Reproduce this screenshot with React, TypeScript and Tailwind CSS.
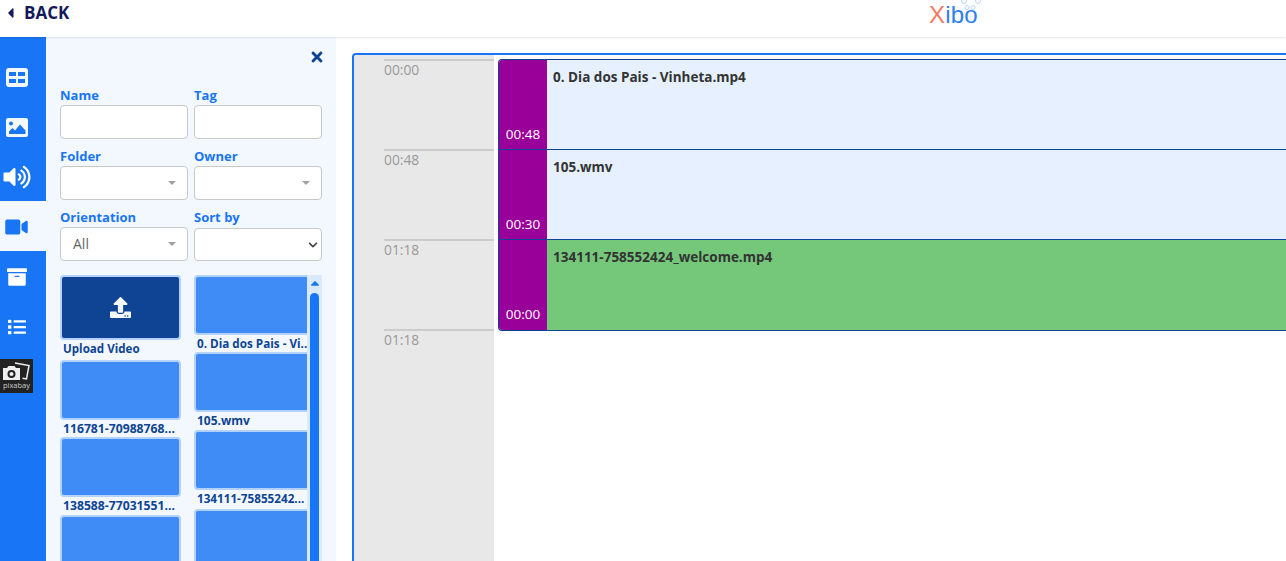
import { FaVolumeUp, FaVideo, FaArchive, FaList, FaTimes, FaCaretLeft, FaUpload, FaCaretUp, FaChevronDown } from "react-icons/fa";

function Field({ label, children }: { label: string; children: React.ReactNode }) {
  return (
    <div className="w-[128px]">
      <div className="text-[13px] leading-[20px] h-[20px] mt-[-2px] font-bold text-[#1775f6]">{label}</div>
      {children}
    </div>
  );
}

function Select2({ value }: { value?: string }) {
  return (
    <div className="h-[34px] bg-white border border-[#c8c8c8] rounded-[4px] flex items-center justify-between pl-3 pr-[11px] text-[14px] text-[#666]">
      <span className="mt-[-2px]">{value}</span>
      <svg width="8" height="4" viewBox="0 0 8 4" fill="#a0a0a0"><path d="M0 0h8L4 4z" /></svg>
    </div>
  );
}

function Card({ label, h = "h-[60px]", w = "w-[121px]", lh = "h-[18px]", size = "text-[12.2px]" }: { label: string; h?: string; w?: string; lh?: string; size?: string }) {
  return (
    <div className="w-full">
      <div className={`${h} ${w} bg-[#3f8cf7] border-2 border-[#b2d1fb] rounded-[4px]`} />
      <div className={`${size} leading-[17px] ${lh} pl-[3px] font-bold text-[#0e4493] whitespace-nowrap overflow-hidden`}>{label}</div>
    </div>
  );
}

function Row({ name, time, bg, last }: { name: string; time: string; bg: string; last?: boolean }) {
  return (
    <div className={`flex h-[90px] ${last ? "" : "border-b border-[#0e4493]"}`}>
      <div className={`w-[48px] shrink-0 bg-[#990099] flex items-end justify-center ${last ? "pb-[6px]" : "pb-[5px]"} text-[13.5px] leading-[20px] text-white`}>{time}</div>
      <div className={`flex-1 ${bg} pl-[6px] pt-[7px] text-[13.5px] leading-[20px] font-bold text-[#333] whitespace-nowrap`}>{name}</div>
    </div>
  );
}

function Tick({ label }: { label: string }) {
  return (
    <div className="h-[90px] ml-[30px] border-t-2 border-[#cccccc] text-[13.8px] leading-[20px] text-[#999]">
      <div className="mt-[-1px]">{label}</div>
    </div>
  );
}

const navBtn = "h-[50px] w-full flex items-center";
const navIcon = "w-[33px] mt-[2px] flex justify-center text-white";

export default function App() {
  return (
    <div className="w-[1286px] h-[561px] overflow-hidden bg-white flex flex-col font-['Open_Sans',sans-serif]">
      <header className="relative h-[37px] shrink-0 bg-white flex shadow-[0_1px_2px_rgba(0,0,0,0.1)] z-10">
        <div className="flex items-start pl-[5px] pt-[2px] text-[#14195a]">
          <FaCaretLeft className="w-[11px] h-[16px] mt-[3px]" />
          <span className="ml-[8px] text-[17px] leading-[22px] font-bold">BACK</span>
        </div>
        <div className="absolute left-[929px] top-[-1px] text-[24px] leading-[32px] tracking-[0.2px] font-['Liberation_Sans',sans-serif]">
          <span className="text-[#f27a5e]">X</span>
          <span className="text-[#2d80f0]">ibo</span>
        </div>
        <svg className="absolute left-[960px] top-0" width="22" height="12" viewBox="0 0 22 12" fill="none" stroke="#bcd4f5" strokeWidth="1">
          <circle cx="4" cy="1" r="2.5" />
          <circle cx="18" cy="1" r="2.5" />
          <circle cx="7" cy="7.500" r="2" />
          <circle cx="13" cy="7.500" r="2" />
        </svg>
      </header>

      <div className="flex flex-1 min-h-0">
        <aside className="w-[46px] shrink-0 bg-[#1775f6] pt-[14px]">
          <div className={navBtn}>
            <span className={navIcon}>
              <svg width="22" height="19" viewBox="0 0 22 19" fill="#f3f8fe">
                <path fillRule="evenodd" d="M3 0h16a3 3 0 0 1 3 3v13a3 3 0 0 1-3 3H3a3 3 0 0 1-3-3V3a3 3 0 0 1 3-3zM3 4v4h7V4zM12 4v4h7V4zM3 11v4h7v-4zM12 11v4h7v-4z" />
              </svg>
            </span>
          </div>
          <div className={navBtn}>
            <span className={navIcon}>
              <svg width="22" height="19" viewBox="0 0 22 19" fill="#f3f8fe">
                <path fillRule="evenodd" d="M2 0h18a2 2 0 0 1 2 2v15a2 2 0 0 1-2 2H2a2 2 0 0 1-2-2V2a2 2 0 0 1 2-2zM5 3.500a2 2 0 1 0 0 4 2 2 0 0 0 0-4zM3 16h16.500v-3.500L14 6.500l-5 6-2.500-2.500L3 13.500z" />
              </svg>
            </span>
          </div>
          <div className={navBtn}><span className={navIcon}><FaVolumeUp className="w-[28px] h-[24px]" /></span></div>
          <div className={`${navBtn} bg-[#f3f8fe]`}><span className={navIcon}><FaVideo className="w-[25px] h-[20px] text-[#1775f6]" /></span></div>
          <div className={navBtn}><span className={navIcon}><FaArchive className="w-[22px] h-[20px]" /></span></div>
          <div className={navBtn}><span className={navIcon}><FaList className="w-[22px] h-[18px]" /></span></div>
          <div className="w-[33px] h-[34px] mt-[8px] bg-[#222222] flex flex-col items-center pt-[3px]">
            <svg width="27" height="19" viewBox="0 0 27 19" fill="none">
              <path d="M0 6h4l1.500-2h6l1.500 2h4v12H0z" fill="#eeeeee" />
              <circle cx="8.500" cy="12" r="4" fill="#222222" />
              <circle cx="8.500" cy="12" r="2" fill="#eeeeee" />
              <path d="M12 1l14 2.500-2.500 13.500-4-.7" stroke="#eeeeee" strokeWidth="1.500" />
            </svg>
            <span className="text-[7.5px] leading-[9px] text-[#cccccc]">pixabay</span>
          </div>
        </aside>

        <section className="w-[290px] shrink-0 bg-[#f3f8fe] flex flex-col pl-[14px] pr-[14px] overflow-hidden">
          <div className="h-[50px] flex justify-end items-start pt-[12px] text-[#0e4493] mr-[-2px]">
            <FaTimes className="w-[14px] h-[16px]" />
          </div>
          <div className="grid grid-cols-[128px_128px] gap-x-[6px] gap-y-[9px]">
            <Field label="Name"><div className="h-[34px] bg-white border border-[#c8c8c8] rounded-[4px]" /></Field>
            <Field label="Tag"><div className="h-[34px] bg-white border border-[#c8c8c8] rounded-[4px]" /></Field>
            <Field label="Folder"><Select2 /></Field>
            <Field label="Owner"><Select2 /></Field>
            <Field label="Orientation"><Select2 value="All" /></Field>
            <Field label="Sort by">
              <div className="h-[33px] mt-px bg-white border border-[#c8c8c8] rounded-[4px] flex items-center justify-end pr-[3px]">
                <FaChevronDown className="w-[10px] h-[10px] text-[#444]" />
              </div>
            </Field>
          </div>

          <div className="flex gap-[13px] mt-[14px] min-h-0 flex-1 overflow-hidden">
            <div className="w-[121px] shrink-0">
              <div className="h-[65px] w-[121px] bg-[#0e4493] border-2 border-[#b2d1fb] rounded-[4px] flex items-center justify-center">
                <FaUpload className="w-[21px] h-[21px] text-[#f3f8fe]" />
              </div>
              <div className="text-[11.6px] leading-[18px] h-[20px] pl-[3px] font-bold text-[#0e4493]">Upload Video</div>
              <div className="flex flex-col">
                <Card label="116781-70988768..." lh="h-[17px]" />
                <Card label="138588-77031551..." lh="h-[18px]" />
                <Card label="" />
              </div>
            </div>
            <div className="w-[128px] shrink-0 flex overflow-hidden">
              <div className="w-[113px] shrink-0 overflow-hidden">
                <Card label="0. Dia dos Pais - Vi.." w="w-[125px]" lh="h-[17px]" size="text-[11.7px]" />
                <Card label="105.wmv" w="w-[125px]" size="text-[12px]" />
                <Card label="134111-75855242..." w="w-[125px]" size="text-[11.7px]" />
                <div className="h-[1px]" />
                <Card label="" w="w-[125px]" h="h-[70px]" />
              </div>
              <div className="w-[15px] shrink-0 bg-[#dbe9fd] flex flex-col items-center">
                <FaCaretUp className="w-[16px] h-[14px] text-[#1775f6] mt-px" />
                <div className="w-[9px] mt-[3px] flex-1 bg-[#1775f6] rounded-t-full" />
              </div>
            </div>
          </div>
        </section>

        <main className="flex-1 min-w-0 pl-[16px] pt-[16px]">
          <div className="h-full w-[calc(100%+8px)] border-t-2 border-l-2 border-[#1775f6] rounded-tl-[4px] flex overflow-hidden">
            <div className="w-[140px] shrink-0 bg-[#e8e8e8] pt-[4px]">
              <Tick label="00:00" />
              <Tick label="00:48" />
              <Tick label="01:18" />
              <Tick label="01:18" />
            </div>
            <div className="flex-1 pl-[4px] pt-[4px]">
              <div className="border-y border-l border-[#0e4493] rounded-l-[4px] overflow-hidden h-[272px]">
                <Row name="0. Dia dos Pais - Vinheta.mp4" time="00:48" bg="bg-[#e6f0fe]" />
                <Row name="105.wmv" time="00:30" bg="bg-[#e6f0fe]" />
                <Row name="134111-758552424_welcome.mp4" time="00:00" bg="bg-[#75c87a]" last />
              </div>
            </div>
          </div>
        </main>
      </div>
    </div>
  );
}
